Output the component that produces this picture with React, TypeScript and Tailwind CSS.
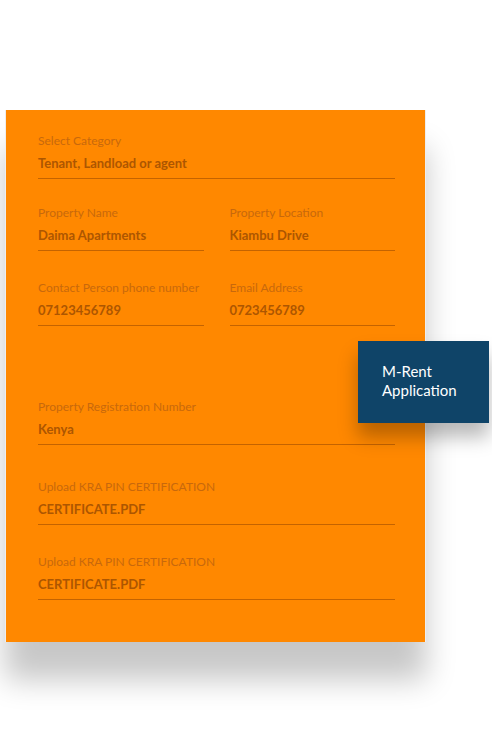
import React from 'react';

interface Field {
    label: string;
    value: string;
}

const FieldRow: React.FC<{ field: Field; className?: string }> = ({ field, className }) => (
    <div className={`border-b border-[#c46300] pb-[6px] ${className ?? ''}`}>
        <p className="text-[12px] leading-4 text-[#c8680c]">{field.label}</p>
        <p className="mt-[5px] text-[13px] leading-[18px] font-bold text-[#ad5600]">{field.value}</p>
    </div>
);

const App: React.FC = () => {
    return (
        <div className="relative w-[492px] h-[744px] bg-white overflow-hidden font-['Lato','Liberation_Sans',sans-serif]">
            <div className="pt-[110px] pl-[5px]">
                {/* Form panel */}
                <div className="w-[421px] bg-[#ff8800] border-x border-[#eeeeee] pt-[23px] pb-[42px] pl-[32px] pr-[30px] shadow-[0_38px_28px_rgba(0,0,0,0.22)]">
                    <FieldRow field={{ label: 'Select Category', value: 'Tenant, Landload or agent' }} />

                    <div className="grid grid-cols-2 gap-x-[26px] mt-[26px]">
                        <FieldRow field={{ label: 'Property Name', value: 'Daima Apartments' }} />
                        <FieldRow field={{ label: 'Property Location', value: 'Kiambu Drive' }} />
                    </div>

                    <div className="grid grid-cols-2 gap-x-[26px] mt-[29px]">
                        <FieldRow field={{ label: 'Contact Person phone number', value: '07123456789' }} />
                        <FieldRow field={{ label: 'Email Address', value: '0723456789' }} />
                    </div>

                    <FieldRow className="mt-[73px]" field={{ label: 'Property Registration Number', value: 'Kenya' }} />
                    <FieldRow className="mt-[34px]" field={{ label: 'Upload KRA PIN CERTIFICATION', value: 'CERTIFICATE.PDF' }} />
                    <FieldRow className="mt-[29px]" field={{ label: 'Upload KRA PIN CERTIFICATION', value: 'CERTIFICATE.PDF' }} />
                </div>
            </div>

            {/* Floating badge */}
            <div className="absolute left-[358px] top-[341px] w-[131px] h-[82px] bg-[#0f4468] pl-[24px] pt-[21px] shadow-[0_14px_18px_rgba(0,0,0,0.28)]">
                <p className="text-white text-[15px] leading-[19px]">M-Rent</p>
                <p className="text-white text-[15px] leading-[19px]">Application</p>
            </div>
        </div>
    );
};

export default App;
